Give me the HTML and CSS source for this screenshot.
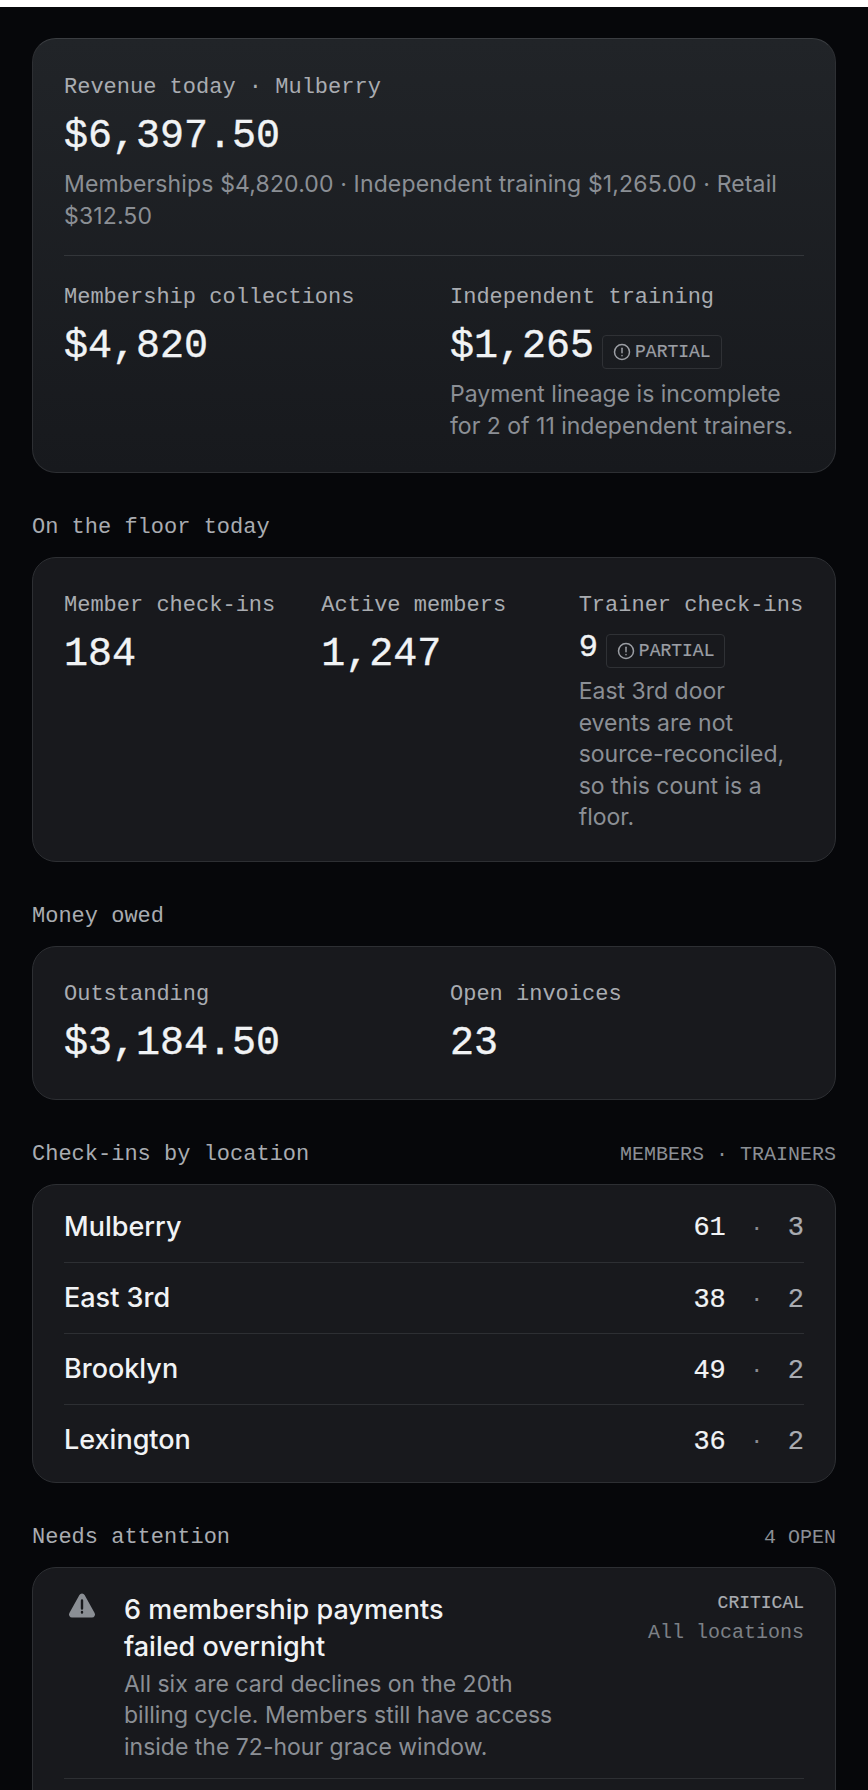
FILE: index.html
```html
<!DOCTYPE html>
<html lang="en">
<head>
<meta charset="utf-8">
<title>Today</title>
<link rel="stylesheet" href="styles.css">
</head>
<body>
<main class="page">
  <section class="card hero">
    <div class="label">Revenue today · Mulberry</div>
    <div class="value">$6,397.50</div>
    <p class="note wide">Memberships $4,820.00 · Independent training $1,265.00 · Retail $312.50</p>
    <div class="grid two split">
      <div>
        <div class="label">Membership collections</div>
        <div class="value">$4,820</div>
      </div>
      <div>
        <div class="label">Independent training</div>
        <div class="value-row">
          <span class="value">$1,265</span>
          <span class="badge"><svg class="badge-icon" viewBox="0 0 24 24"><circle cx="12" cy="12" r="10"/><path d="M12 7v6"/><path d="M12 16.5v.5"/></svg>PARTIAL</span>
        </div>
        <p class="note">Payment lineage is incomplete for 2 of 11 independent trainers.</p>
      </div>
    </div>
  </section>

  <h2 class="section-head"><span>On the floor today</span></h2>
  <section class="card floor">
    <div class="grid three">
      <div>
        <div class="label">Member check-ins</div>
        <div class="value">184</div>
      </div>
      <div>
        <div class="label">Active members</div>
        <div class="value">1,247</div>
      </div>
      <div>
        <div class="label">Trainer check-ins</div>
        <div class="value-row small-row">
          <span class="value small">9</span>
          <span class="badge"><svg class="badge-icon" viewBox="0 0 24 24"><circle cx="12" cy="12" r="10"/><path d="M12 7v6"/><path d="M12 16.5v.5"/></svg>PARTIAL</span>
        </div>
        <p class="note narrow">East 3rd door events are not source-reconciled, so this count is a floor.</p>
      </div>
    </div>
  </section>

  <h2 class="section-head"><span>Money owed</span></h2>
  <section class="card">
    <div class="grid two">
      <div>
        <div class="label">Outstanding</div>
        <div class="value">$3,184.50</div>
      </div>
      <div>
        <div class="label">Open invoices</div>
        <div class="value">23</div>
      </div>
    </div>
  </section>

  <h2 class="section-head"><span>Check-ins by location</span><span class="aside">MEMBERS · TRAINERS</span></h2>
  <section class="card rows">
    <div class="row"><span class="name">Mulberry</span><span class="nums"><b>61</b><i>·</i><em>3</em></span></div>
    <div class="row"><span class="name">East 3rd</span><span class="nums"><b>38</b><i>·</i><em>2</em></span></div>
    <div class="row"><span class="name">Brooklyn</span><span class="nums"><b>49</b><i>·</i><em>2</em></span></div>
    <div class="row"><span class="name">Lexington</span><span class="nums"><b>36</b><i>·</i><em>2</em></span></div>
  </section>

  <h2 class="section-head"><span>Needs attention</span><span class="aside">4 OPEN</span></h2>
  <section class="card alerts">
    <article class="alert">
      <svg class="alert-icon" viewBox="0 0 28 25"><path d="M11.4 2a3 3 0 0 1 5.2 0l10 18a3 3 0 0 1-2.6 4.5H4A3 3 0 0 1 1.4 20z"/><path class="mark" d="M14 7.5v8M14 19v.6"/></svg>
      <div class="alert-body">
        <h3 class="alert-title">6 membership payments failed overnight</h3>
        <p class="note">All six are card declines on the 20th billing cycle. Members still have access inside the 72-hour grace window.</p>
      </div>
      <div class="alert-meta">
        <div class="severity">CRITICAL</div>
        <div class="scope">All locations</div>
      </div>
    </article>
  </section>
</main>
</body>
</html>
```
FILE: styles.css
```css
* { box-sizing: border-box; }
html, body { margin: 0; background: #fff; }
body { padding-top: 7px; height: 1790px; overflow: hidden; }
.page {
  height: 1783px;
  overflow: hidden;
  padding: 31px 32px 0;
  background: #06070a;
  font-family: Inter, "Noto Sans", sans-serif;
  color: #f1f3f5;
}
.card {
  background: #18191d;
  border: 1px solid #2d2f33;
  border-radius: 24px;
  padding: 34px 31px 31px;
}
.hero {
  padding-top: 35px;
  padding-bottom: 30px;
  background: linear-gradient(180deg, #212428 0%, #17191d 100%);
  border-top-color: #3a3d41;
}
.floor { padding-bottom: 27px; }
.label {
  font: 22px/28px "Liberation Mono", monospace;
  color: #a9acb1;
}
.value {
  font: 40px/48px "Liberation Mono", monospace;
  -webkit-text-stroke: 0.4px currentColor;
  color: #f1f3f5;
  margin-top: 11px;
}
.value.small { font-size: 32px; line-height: 40px; margin-top: 0; }
.value-row { display: flex; align-items: baseline; gap: 8px; margin-top: 11px; }
.value-row .value { margin-top: 0; }
.small-row { margin-top: 8px; }
.note {
  margin: 8px 0 0;
  font-size: 23px;
  line-height: 31.5px;
  color: #8b8f95;
}
.wide { letter-spacing: 0.14px; }
.narrow { max-width: 215px; }
.grid { display: grid; column-gap: 32px; }
.two { grid-template-columns: 1fr 1fr; }
.three { grid-template-columns: 1fr 1fr 1fr; }
.split { border-top: 1px solid #33363a; margin-top: 23px; padding-top: 28px; }
.badge {
  display: inline-flex;
  align-items: baseline;
  gap: 4px;
  height: 34px;
  padding: 7px 10px;
  border: 1px solid #2f3135;
  border-radius: 4px;
  font: 18px/18px "Liberation Mono", monospace;
  -webkit-text-stroke: 0.2px currentColor;
  color: #9b9ea4;
}
.badge-icon { align-self: center; width: 18px; height: 18px; fill: none; stroke: #9b9ea4; stroke-width: 2; stroke-linecap: round; -webkit-text-stroke: 0; }
.section-head {
  display: flex;
  justify-content: space-between;
  align-items: baseline;
  margin: 41px 0 15px;
  font: 400 22px/28px "Liberation Mono", monospace;
  color: #a9acb1;
}
.aside { font-size: 20px; color: #8b8f95; }
.rows { padding-top: 6px; padding-bottom: 7px; }
.row {
  display: flex;
  justify-content: space-between;
  align-items: center;
  height: 71px;
  border-top: 1px solid #2d2f33;
}
.row:first-child { border-top: 0; }
.name { font-size: 27px; font-weight: 450; color: #f1f3f5; }
.nums { display: flex; align-items: center; padding-top: 5px; font: 27px/1 "Liberation Mono", monospace; -webkit-text-stroke: 0.2px currentColor; }
.nums b { font-weight: 400; color: #f1f3f5; }
.nums i { font-style: normal; width: 62px; text-align: center; font-size: 20px; color: #8b8f95; }
.nums em { font-style: normal; color: #a9acb1; }
.alerts { padding-top: 23px; padding-bottom: 40px; }
.alert {
  display: flex;
  align-items: flex-start;
  gap: 28px;
  padding-bottom: 15px;
  border-bottom: 1px solid #2d2f33;
}
.alert-icon { flex: none; width: 28px; height: 25px; margin: 2px 0 0 4px; fill: #8b8f95; }
.mark { fill: none; stroke: #18191d; stroke-width: 2.4; stroke-linecap: round; }
.alert-body { flex: 1; min-width: 0; }
.alert-title { margin: 0; max-width: 380px; font-size: 27px; line-height: 37px; font-weight: 450; color: #f1f3f5; }
.alert-body .note { max-width: 440px; margin-top: 4px; }
.alert-meta { text-align: right; }
.severity { font: 18px/24px "Liberation Mono", monospace; -webkit-text-stroke: 0.2px currentColor; color: #a9acb1; }
.scope { font: 20px/28px "Liberation Mono", monospace; color: #7c8086; margin-top: 4px; }
```
